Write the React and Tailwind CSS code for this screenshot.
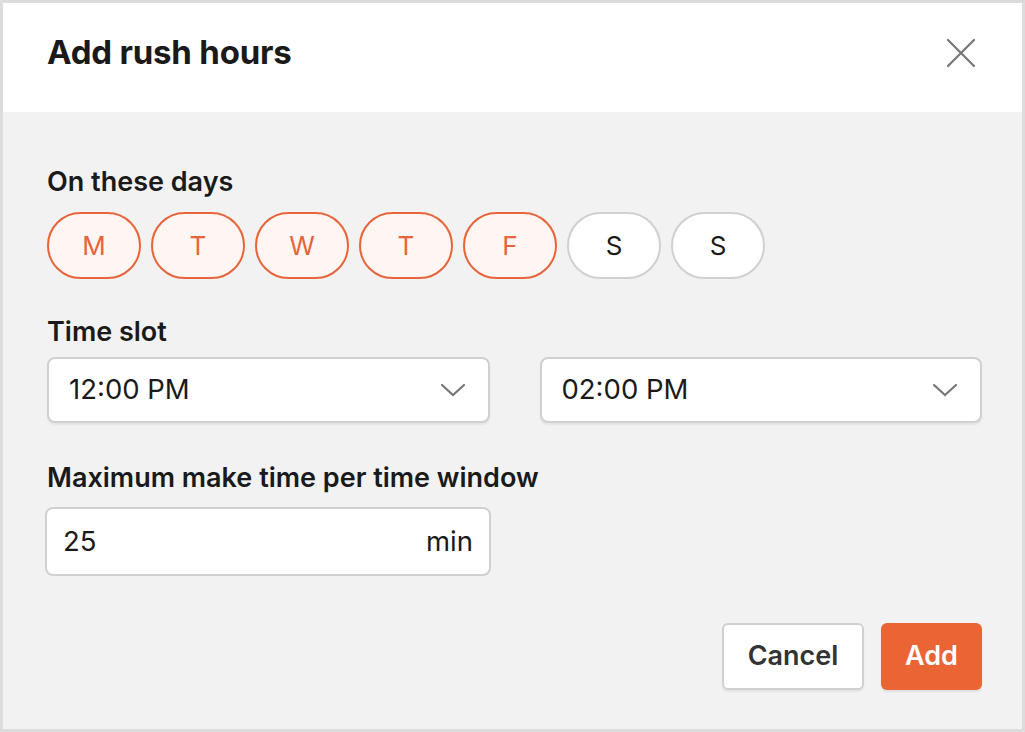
const DAYS = [
  { label: "M", on: true },
  { label: "T", on: true },
  { label: "W", on: true },
  { label: "T", on: true },
  { label: "F", on: true },
  { label: "S", on: false },
  { label: "S", on: false },
];

function Chevron() {
  return (
    <svg width="26" height="16" viewBox="0 0 26 16" fill="none" stroke="#777" strokeWidth="2.2" strokeLinecap="round">
      <path d="M2 3 L13 13 L24 3" />
    </svg>
  );
}

function TimeSelect({ value }) {
  return (
    <div className="flex-1 h-[66px] flex items-center justify-between bg-white border-2 border-[#d0d0d0] rounded-lg pl-[20px] pr-[22px] shadow-[0_2px_2px_rgba(0,0,0,0.06)]">
      <span className="text-[27.5px] text-[#1a1a1a]">{value}</span>
      <Chevron />
    </div>
  );
}

export default function App() {
  return (
    <div
      className="w-[1025px] h-[732px] border-[3px] border-[#dcdcdc] bg-[#f2f2f2] flex flex-col"
      style={{ fontFamily: "Inter, 'Liberation Sans', sans-serif" }}
    >
      <div className="h-[109px] bg-white flex items-center justify-between pl-[44px] pr-[46px] pb-[9px] shrink-0">
        <h1 className="text-[33px] font-bold text-[#1a1a1a] tracking-[-0.2px]">Add rush hours</h1>
        <svg width="30" height="30" viewBox="0 0 30 30" stroke="#777" strokeWidth="2.2" strokeLinecap="round">
          <path d="M2 2 L28 28 M28 2 L2 28" />
        </svg>
      </div>

      <div className="flex-1 flex flex-col pl-[44px] pr-[40px] pt-[54px]">
        <div className="text-[27px] font-semibold text-[#1a1a1a] leading-[32px]">On these days</div>
        <div className="flex gap-[10px] mt-[14px]">
          {DAYS.map((d, i) => (
            <div
              key={i}
              className={
                d.on
                  ? "w-[94px] h-[67px] rounded-full border-2 border-[#e8643a] bg-[#fff5f2] text-[#e8643a] flex items-center justify-center text-[26px]"
                  : "w-[94px] h-[67px] rounded-full border-2 border-[#d0d0d0] bg-white text-[#1a1a1a] flex items-center justify-center text-[26px]"
              }
            >
              {d.label}
            </div>
          ))}
        </div>

        <div className="text-[27px] font-semibold text-[#1a1a1a] leading-[32px] mt-[37px]">Time slot</div>
        <div className="flex gap-[50px] mt-[9px]">
          <TimeSelect value="12:00 PM" />
          <TimeSelect value="02:00 PM" />
        </div>

        <div className="text-[27px] font-semibold text-[#1a1a1a] leading-[32px] mt-[39px]">Maximum make time per time window</div>
        <div className="w-[446px] h-[69px] -ml-[2px] mt-[13px] flex items-center justify-between bg-white border-2 border-[#d0d0d0] rounded-lg pl-[16px] pr-[16px]">
          <span className="text-[27.5px] text-[#1a1a1a]">25</span>
          <span className="text-[27.5px] text-[#1a1a1a]">min</span>
        </div>

        <div className="flex justify-end gap-[17px] mt-[47px]">
          <button className="w-[142px] h-[67px] bg-white border-2 border-[#d0d0d0] rounded-md text-[27px] font-semibold text-[#333] shadow-[0_2px_2px_rgba(0,0,0,0.06)]">
            Cancel
          </button>
          <button className="w-[101px] h-[67px] bg-[#ea6434] rounded-md text-[27px] font-semibold text-white shadow-[0_2px_2px_rgba(0,0,0,0.08)]">
            Add
          </button>
        </div>
      </div>
    </div>
  );
}
